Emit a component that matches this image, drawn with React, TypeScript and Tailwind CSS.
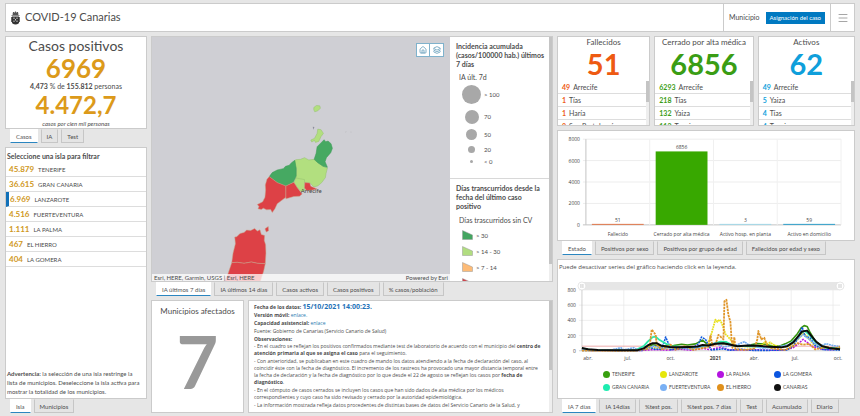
import { useState } from 'react';
import type { ReactNode } from 'react';
import { House, Layers, Menu } from 'lucide-react';
import clsx from 'clsx';

type Row = { count: string; name: string };

const islands: Row[] = [
  { count: '45.879', name: 'TENERIFE' },
  { count: '36.615', name: 'GRAN CANARIA' },
  { count: '6.969', name: 'LANZAROTE' },
  { count: '4.516', name: 'FUERTEVENTURA' },
  { count: '1.111', name: 'LA PALMA' },
  { count: '467', name: 'EL HIERRO' },
  { count: '404', name: 'LA GOMERA' },
];

const statusCards = [
  {
    title: 'Fallecidos',
    total: '51',
    color: 'text-[#ee5a12]',
    rows: [
      { count: '49', name: 'Arrecife' },
      { count: '1', name: 'Tías' },
      { count: '1', name: 'Haría' },
      { count: '0', name: 'San Bartolomé' },
    ],
  },
  {
    title: 'Cerrado por alta médica',
    total: '6856',
    color: 'text-[#3a9d14]',
    rows: [
      { count: '6293', name: 'Arrecife' },
      { count: '218', name: 'Tías' },
      { count: '132', name: 'Yaiza' },
      { count: '112', name: 'Teguise' },
    ],
  },
  {
    title: 'Activos',
    total: '62',
    color: 'text-[#0f9fdb]',
    rows: [
      { count: '49', name: 'Arrecife' },
      { count: '5', name: 'Yaiza' },
      { count: '4', name: 'Tías' },
      { count: '4', name: 'Teguise' },
    ],
  },
];

const bars = [
  { label: 'Fallecido', value: 51, color: '#e0774a' },
  { label: 'Cerrado por alta médica', value: 6856, color: '#38a800' },
  { label: 'Activo hosp. en planta', value: 3, color: '#a3d8e8' },
  { label: 'Activo en domicilio', value: 59, color: '#2f9fcb' },
];

type Series = {
  name: string;
  color: string;
  dot: string;
  dash?: string;
  width: number;
  points: number[][];
};

// Each point is [x in the plot, incidence]
const series: Series[] = [
  {
    name: 'TENERIFE', color: '#38940f', dot: 'bg-[#38a00f]', width: 1.6,
    points: [[24, 30], [32, 12], [60, 8], [84, 10], [90, 50], [95, 80], [100, 70], [108, 60], [116, 70], [124, 85], [130, 75], [138, 90], [145, 140], [149, 95], [155, 90], [162, 100], [170, 90], [178, 60], [190, 70], [200, 95], [208, 85], [214, 65], [222, 60], [228, 90], [234, 130], [240, 220], [244, 300], [247, 330], [250, 320], [253, 240], [258, 130], [264, 70], [272, 40], [283, 20]],
  },
  {
    name: 'LANZAROTE', color: '#e8e01c', dot: 'bg-[#e6e60a]', dash: '1.8 .7', width: 1.8,
    points: [[24, 20], [36, 2], [80, 3], [90, 20], [97, 40], [104, 25], [118, 20], [132, 30], [144, 40], [150, 80], [153, 180], [156, 320], [158, 410], [160, 380], [162, 410], [164, 370], [166, 300], [168, 220], [171, 180], [174, 130], [178, 60], [190, 55], [200, 60], [205, 80], [208, 120], [210, 90], [213, 110], [216, 80], [222, 50], [232, 60], [240, 140], [246, 230], [250, 190], [256, 90], [264, 40], [283, 25]],
  },
  {
    name: 'LA PALMA', color: '#b910e0', dot: 'bg-[#b414e0]', dash: '2 1', width: 1.5,
    points: [[24, 18], [34, 2], [84, 4], [96, 15], [110, 8], [122, 20], [134, 8], [146, 30], [152, 15], [163, 45], [172, 12], [186, 8], [198, 15], [212, 5], [228, 12], [236, 40], [241, 90], [246, 150], [250, 110], [255, 60], [262, 25], [274, 12], [283, 30]],
  },
  {
    name: 'LA GOMERA', color: '#0d58dc', dot: 'bg-[#0b55e0]', dash: '2 .8', width: 1.6,
    points: [[24, 5], [60, 2], [84, 4], [92, 45], [97, 20], [104, 20], [106, 100], [108, 180], [111, 90], [113, 15], [122, 30], [136, 45], [141, 90], [144, 180], [148, 150], [151, 70], [154, 10], [166, 25], [172, 5], [184, 20], [196, 5], [212, 5], [230, 10], [236, 60], [241, 170], [245, 310], [248, 190], [253, 170], [258, 70], [266, 15], [283, 10]],
  },
  {
    name: 'GRAN CANARIA', color: '#2ce8a8', dot: 'bg-[#1eecb0]', width: 1.8,
    points: [[24, 30], [34, 8], [78, 8], [86, 60], [90, 120], [95, 180], [98, 185], [102, 140], [108, 95], [114, 60], [124, 50], [136, 45], [148, 60], [156, 90], [163, 120], [169, 115], [176, 65], [188, 60], [202, 50], [216, 45], [230, 60], [238, 140], [244, 240], [248, 260], [253, 200], [260, 90], [268, 40], [283, 30]],
  },
  {
    name: 'FUERTEVENTURA', color: '#74aef2', dot: 'bg-[#7ab0f4]', dash: '2 .6', width: 1.7,
    points: [[24, 10], [38, 4], [54, 10], [63, 40], [66, 10], [76, 40], [80, 12], [90, 35], [96, 60], [104, 30], [118, 50], [132, 20], [148, 60], [158, 100], [166, 50], [180, 80], [187, 120], [191, 80], [204, 35], [220, 50], [232, 80], [240, 150], [246, 215], [252, 150], [256, 110], [263, 60], [269, 95], [275, 70], [283, 55]],
  },
  {
    name: 'EL HIERRO', color: '#e0962a', dot: 'bg-[#e0901c]', dash: '2.4 .8', width: 1.8,
    points: [[24, 2], [76, 2], [88, 20], [92, 60], [94, 280], [98, 210], [99, 80], [104, 20], [113, 80], [118, 15], [127, 60], [136, 10], [147, 40], [151, 50], [153, 200], [155, 70], [158, 80], [161, 210], [166, 150], [167, 650], [169, 670], [171, 470], [173, 380], [174, 180], [175, 40], [177, 180], [178, 20], [188, 10], [197, 30], [200, 150], [201, 260], [204, 150], [207, 170], [210, 60], [215, 30], [228, 10], [236, 60], [240, 100], [246, 80], [252, 90], [258, 20], [270, 50], [276, 20], [283, 50]],
  },
  {
    name: 'CANARIAS', color: '#0a0a0a', dot: 'bg-[#111111]', width: 2,
    points: [[24, 35], [30, 18], [40, 9], [60, 8], [80, 8], [86, 32], [90, 70], [95, 100], [99, 100], [104, 65], [112, 50], [120, 45], [132, 50], [140, 55], [145, 75], [151, 68], [158, 92], [166, 100], [171, 85], [180, 60], [190, 68], [200, 66], [212, 52], [224, 45], [230, 60], [236, 110], [241, 190], [245, 255], [250, 265], [254, 200], [259, 120], [265, 60], [272, 35], [283, 20]],
  },
];

function Panel({ children, className }: { children: ReactNode; className?: string }) {
  return <section className={clsx('min-h-0 min-w-0 overflow-hidden border border-[#cbcbcb] bg-white', className)}>{children}</section>;
}

function Tabs({ items }: { items: string[] }) {
  const [active, setActive] = useState(items[0]);
  return (
    <div role="tablist" className="flex h-[14px] shrink-0 gap-[3px] pl-[5px]">
      {items.map((item) => (
        <button
          key={item}
          type="button"
          role="tab"
          aria-selected={item === active}
          onClick={() => setActive(item)}
          className={clsx(
            'whitespace-nowrap border px-[5px] text-[6px] leading-[11px]',
            item === active
              ? 'border-transparent border-b-[#2b86c0] bg-white text-[#555555]'
              : 'border-[#c6c6c6] border-t-transparent bg-[#e4e4e4] text-[#4c4c4c]'
          )}
        >
          {item}
        </button>
      ))}
    </div>
  );
}

function Logo() {
  return (
    <svg viewBox="0 0 18 28" className="h-[14px] w-[9px]" fill="#333" aria-hidden="true">
      <path d="M4 2h2l1 2 1-3h2l1 3 1-2h2l1 5-2 2H5L3 7z" fill="#555" />
      <path d="M1 8h16v2H1z" fill="#888" />
      <path d="M2 11h14v12q0 3-7 4-7-1-7-4z" />
      <path d="M0 12h2v10H0zM16 12h2v10h-2z" fill="#666" />
      <path d="M5 13h2v3H5zM11 13h2v3h-2zM5 19h2v3H5zM11 19h2v3h-2zM8 16h2v3H8z" fill="#ccc" />
    </svg>
  );
}

function Header() {
  return (
    <header className="flex h-[29px] shrink-0 items-stretch border border-[#cbcbcb] bg-white">
      <div className="flex flex-1 items-center gap-[5px] pl-[5px]">
        <Logo />
        <h1 className="text-[11px] text-[#4c4c4c]">COVID-19 Canarias</h1>
      </div>
      <div className="flex items-center gap-[6px] border-l border-[#cbcbcb] px-[5px]">
        <span className="text-[7px]">Municipio</span>
        <button type="button" className="h-[12px] bg-[#0079c1] px-[4px] text-[6px] leading-[12px] text-white">
          Asignación del caso
        </button>
      </div>
      <button type="button" aria-label="Menú" className="flex w-6 items-center justify-center border-l border-[#cbcbcb] text-[#888888]">
        <Menu size={12} strokeWidth={1.5} />
      </button>
    </header>
  );
}

function CasesPanel() {
  return (
    <div className="flex min-h-0 min-w-0 flex-col">
      <Panel className="flex-1 text-center">
        <h2 className="text-[14px] leading-[17px]">Casos positivos</h2>
        <p className="text-[26px] font-bold leading-[28px] text-[#dc9a1a]">6969</p>
        <p className="text-[7px] leading-[8px]">
          <b>4,473</b> % de <b>155.812</b> personas
        </p>
        <p className="text-[24px] font-bold leading-[30px] text-[#dc9a1a]">4.472,7</p>
        <p className="text-[6px] italic leading-[7px]">casos por cien mil personas</p>
      </Panel>
      <Tabs items={['Casos', 'IA', 'Test']} />
    </div>
  );
}

function IslandsPanel() {
  const [selected, setSelected] = useState('LANZAROTE');
  return (
    <div className="flex min-h-0 min-w-0 flex-col">
      <Panel className="flex flex-1 flex-col">
        <h2 className="px-px pt-[2px] text-[7px] font-bold leading-[12px]">Seleccione una isla para filtrar</h2>
        <ul>
          {islands.map((island) => (
            <li key={island.name}>
              <button
                type="button"
                onClick={() => setSelected(island.name)}
                className={clsx(
                  'flex h-[15px] w-full items-center gap-[4px] border-b border-[#dddddd] text-left',
                  island.name === selected ? 'border-l-[3px] border-l-[#1170b8] pl-px' : 'pl-[3px]'
                )}
              >
                <span className="text-[8px] font-bold text-[#d0981c]">{island.count}</span>
                <span className="text-[6px]">{island.name}</span>
              </button>
            </li>
          ))}
        </ul>
        <p className="mt-auto pb-[2px] pl-px pr-1 text-[6px] leading-[9px]">
          <b>Advertencia:</b> la selección de una isla restringe la lista de municipios. Deseleccione la isla activa para
          mostrar la totalidad de los municipios.
        </p>
      </Panel>
      <Tabs items={['Isla', 'Municipios']} />
    </div>
  );
}

function IslandMap() {
  return (
    <svg viewBox="-237 -162 897 738" preserveAspectRatio="xMidYMid slice" className="h-full w-full" stroke="#c9a58c" strokeWidth="1.5" strokeLinejoin="round">
      <g fill="#b2df7f" stroke="#93bf70">
        <path d="M250 59L250 52L258 46L268 47L270 54L262 62L253 65Z" />
        <path d="M260 130L262 117L272 119L279 130L272 139L265 154L255 157L252 151L244 156L241 150L252 145Z" />
        <path d="M189 215L196 209L210 208L222 203L235 210L251 208L262 218L278 229L291 234L287 250L285 263L274 278L262 288L250 291L240 280L222 278L196 268L198 235Z" />
        <path d="M190 278L196 264L222 269L223 302L212 305L200 293Z" />
      </g>
      <g fill="#46a962" stroke="#3c9a58">
        <path d="M281 149L286 155L293 153L302 161L306 175L301 188L288 203L284 215L291 232L278 229L262 218L251 208L257 190L260 170L272 158Z" />
        <path d="M116 260L125 248L140 240L158 236L165 229L176 226L183 218L193 211L197 235L197 258L188 277L166 288L140 278Z" />
      </g>
      <g fill="#dd4146">
        <path d="M116 260L140 278L166 288L166 322L150 334L140 342L133 357L125 368L120 359L108 360L98 355L92 359L82 357L85 350L80 344L96 336L103 322L105 300L104 285L109 268Z" />
        <path d="M166 288L190 277L200 293L215 312L207 319L190 320L166 327Z" />
        <path d="M223 278L238 279L241 289L260 297L244 301L228 302L222 294Z" />
        <path d="M103 417L113 410L114 423L107 427Z" />
        <path d="M12 442L18 441L28 431L40 428L48 421L60 422L72 416L80 424L88 420L92 434L102 437L101 452L105 465L106 490L104 522L80 521L62 517L40 521L20 518L3 519L7 490L14 462Z" />
        <path d="M3 519L20 518L40 521L62 517L80 521L104 522L99 545L94 560L88 580H-22L-9 555Z" />
      </g>
      <path d="M247 110l5 1-4 8z" fill="#8d8d9a" stroke="none" />
      <path d="M345 126l3-1M361 126l2 0" stroke="#a8a8a8" />
      <text x="211" y="308" fontSize="18" fill="#444" stroke="none">Arrecife</text>
    </svg>
  );
}

const sizeLegend = [
  { label: '> 100', size: 'size-[19px]', row: 'h-[25px]' },
  { label: '70', size: 'size-[14px]', row: 'h-[19px]' },
  { label: '50', size: 'size-[11px]', row: 'h-[17px]' },
  { label: '20', size: 'size-[7px]', row: 'h-[13px]' },
  { label: '< 0', size: 'size-[3px]', row: 'h-[11px]' },
];

const colorLegend = [
  { label: '> 30', fill: '#43a560' },
  { label: '> 14 - 30', fill: '#b1dd80' },
  { label: '> 7 - 14', fill: '#fdbb77' },
  { label: '0 - 7', fill: '#d0424a' },
];

function MapLegend() {
  return (
    <aside className="flex w-[102px] shrink-0 bg-white">
      <div className="min-w-0 flex-1 overflow-hidden">
        <div className="h-[142px] border-b border-[#d8d8d8] pt-[5px]">
          <h3 className="pl-[6px] text-[7px] font-bold leading-[9px]">
            Incidencia acumulada (casos/100000 hab.) últimos 7 días
          </h3>
          <p className="pl-[9px] pt-[4px] text-[7px] leading-[9px]">IA últ. 7d</p>
          <ul className="text-[6px]">
            {sizeLegend.map((item) => (
              <li key={item.label} className={clsx('flex items-center gap-[3px] pl-[12px]', item.row)}>
                <span className="flex w-[19px] justify-center">
                  <span className={clsx('rounded-full bg-[#a8a8a8]', item.size)} />
                </span>
                {item.label}
              </li>
            ))}
          </ul>
        </div>
        <h3 className="pl-[6px] pr-[6px] pt-[5px] text-[7px] font-bold leading-[9px]">
          Días transcurridos desde la fecha del último caso positivo
        </h3>
        <p className="pl-[9px] pt-[4px] text-[7px] leading-[10px]">Días trascurridos sin CV</p>
        <ul className="pt-[2px] text-[6px]">
          {colorLegend.map((item) => (
            <li key={item.label} className="flex h-4 items-center gap-[3px] pl-[12px]">
              <svg viewBox="0 0 11 10" className="h-[10px] w-[11px]" fill={item.fill} stroke="#999" strokeWidth=".5">
                <path d="M.5.5L10.5 5v4.500H.5z" />
              </svg>
              {item.label}
            </li>
          ))}
        </ul>
      </div>
      <div className="w-[3px] bg-[#eeeeee]">
        <div className="h-[93%] bg-[#c4c4c4]" />
      </div>
    </aside>
  );
}

function MapPanel() {
  return (
    <div className="flex min-h-0 min-w-0 flex-col">
      <Panel className="flex flex-1">
        <div className="relative min-w-0 flex-1 bg-[#cfcfd4]">
          <IslandMap />
          <div className="absolute right-[6px] top-[6px] flex border border-[#7fb2cc] bg-white text-[#3f87ab]">
            <button type="button" aria-label="Inicio" className="flex h-3 w-[13px] items-center justify-center border-r border-[#7fb2cc]">
              <House size={8} />
            </button>
            <button type="button" aria-label="Capas" className="flex h-3 w-[13px] items-center justify-center">
              <Layers size={8} />
            </button>
          </div>
          <div className="absolute inset-x-0 bottom-0 flex justify-between bg-white/75 px-[2px] text-[6px] leading-[7px]">
            <span>Esri, HERE, Garmin, USGS | Esri, HERE</span>
            <span>Powered by Esri</span>
          </div>
        </div>
        <MapLegend />
      </Panel>
      <Tabs items={['IA últimos 7 días', 'IA últimos 14 días', 'Casos activos', 'Casos positivos', '% casos/población']} />
    </div>
  );
}

function NotesPanel() {
  return (
    <Panel className="flex">
      <div className="min-w-0 flex-1 overflow-hidden pl-[5px] pr-[6px] pt-[2px] font-['Open_Sans',sans-serif] text-[5px] leading-[7px]">
        <div className="leading-[8px]">
          <p>
            <b>Fecha de los datos:</b> <b className="text-[7px] text-[#1f72b8]">15/10/2021 14:00:23.</b>
          </p>
          <p>
            <b>Versión móvil:</b> <a href="#movil" className="text-[#2a7ab0]">enlace.</a>
          </p>
          <p>
            <b>Capacidad asistencial:</b> <a href="#asistencial" className="text-[#2a7ab0]">enlace</a>
          </p>
          <p>Fuente: Gobierno de Canarias (Servicio Canario de Salud)</p>
          <p className="font-bold">Observaciones:</p>
        </div>
        <div className="space-y-px">
          <p>
            - En el cuadro se reflejan los positivos confirmados mediante test de laboratorio de acuerdo con el municipio
            del <b>centro de atención primaria al que se asigna el caso</b> para el seguimiento.
          </p>
          <p>
            - Con anterioridad, se publicaban en este cuadro de mando los datos atendiendo a la fecha de declaración del
            caso, al coincidir éste con la fecha de diagnóstico. El incremento de los rastreos ha provocado una mayor
            distancia temporal entre la fecha de declaración y la fecha de diagnóstico por lo que desde el 22 de agosto
            se reflejan los casos por <b>fecha de diagnóstico</b>.
          </p>
          <p>
            - En el cómputo de casos cerrados se incluyen los casos que han sido dados de alta médica por los médicos
            correspondientes y cuyo caso ha sido revisado y cerrado por la autoridad epidemiológica.
          </p>
          <p>- La información mostrada refleja datos procedentes de distintas bases de datos del Servicio Canario de la Salud, y</p>
        </div>
      </div>
      <div className="w-[3px] bg-[#eeeeee]">
        <div className="h-[62%] bg-[#c4c4c4]" />
      </div>
    </Panel>
  );
}

function StatusCard({ title, total, color, rows }: (typeof statusCards)[number]) {
  return (
    <Panel className="flex flex-col">
      <h2 className="text-center text-[8px] leading-[10px]">{title}</h2>
      <p className={clsx('text-center text-[29px] font-bold leading-[34px]', color)}>{total}</p>
      <div className="flex min-h-0 flex-1">
        <ul className="min-w-0 flex-1 overflow-hidden">
          {rows.map((row) => (
            <li key={row.name} className="flex h-[13px] items-center gap-[3px] whitespace-nowrap border-b border-[#dddddd] pl-[4px] text-[7px]">
              <b className={color}>{row.count}</b>
              <span>{row.name}</span>
            </li>
          ))}
        </ul>
        <div className="w-[3px] bg-[#eeeeee]">
          <div className="h-[48%] bg-[#c4c4c4]" />
        </div>
      </div>
    </Panel>
  );
}

function BarChart() {
  const y = (value: number) => 94 - (value / 8000) * 86;
  return (
    <svg viewBox="0 0 297 109" className="h-full w-full font-['Open_Sans',sans-serif]" fontSize="5" fill="#444">
      {[0, 2000, 4000, 6000, 8000].map((tick) => (
        <g key={tick}>
          <path d={`M25 ${y(tick)}H284`} stroke={tick ? '#ededed' : '#c4c4c4'} />
          <text x="22" y={y(tick) + 2} textAnchor="end">{tick}</text>
        </g>
      ))}
      {[92, 156, 220, 284].map((x) => (
        <path key={x} d={`M${x} 8V94`} stroke="#f0f0f0" />
      ))}
      <path d="M28 8V94" stroke="#c4c4c4" />
      {bars.map((bar, i) => {
        const height = Math.max(94 - y(bar.value), 1);
        const center = 60 + i * 64;
        return (
          <g key={bar.label} textAnchor="middle">
            <rect x={center - 26} y={94 - height} width="52" height={height} fill={bar.color} />
            <text x={center} y={92 - height}>{bar.value}</text>
            <text x={center} y="105">{bar.label}</text>
          </g>
        );
      })}
    </svg>
  );
}

function LineChart({ hidden }: { hidden: string[] }) {
  const y = (value: number) => 73 - (value / 800) * 61;
  const toPath = (points: number[][]) => 'M' + points.map(([x, value]) => `${x} ${y(value).toFixed(1)}`).join('L');
  return (
    <svg viewBox="0 0 297 84" className="w-full font-['Open_Sans',sans-serif]" fontSize="5" fill="#444">
      {[0, 200, 400, 600, 800].map((tick) => (
        <g key={tick}>
          <path d={`M21 ${y(tick)}H283`} stroke={tick ? '#e8e8e8' : '#bbbbbb'} strokeWidth=".7" />
          <text x="18" y={y(tick) + 2} textAnchor="end">{tick}</text>
        </g>
      ))}
      {[66, 108, 150, 192, 234, 276].map((x) => (
        <path key={x} d={`M${x} 12V73`} stroke="#e8e8e8" strokeWidth=".7" />
      ))}
      <path d="M24 12V73" stroke="#bbbbbb" strokeWidth=".7" />
      <path d={`M24 ${y(60)}H283`} stroke="#e88a8a" strokeWidth=".7" />
      {series
        .filter((s) => !hidden.includes(s.name))
        .map((s) => (
          <path key={s.name} d={toPath(s.points)} fill="none" stroke={s.color} strokeWidth={s.width} strokeDasharray={s.dash} strokeLinejoin="round" />
        ))}
      <rect x="24" y="4" width="259" height="8" fill="#e6e6e6" />
      {[24, 283].map((x) => (
        <g key={x}>
          <circle cx={x} cy="8" r="4" fill="#fff" stroke="#dcdcdc" strokeWidth=".7" />
          <path d={`M${x - 1} 6v4M${x + 1} 6v4`} stroke="#aaa" strokeWidth=".6" />
        </g>
      ))}
      <g textAnchor="middle">
        <text x="30" y="82">abr.</text>
        <text x="70" y="82">jul.</text>
        <text x="113" y="82">oct.</text>
        <text x="158" y="82" fontWeight="bold">2021</text>
        <text x="197" y="82">abr.</text>
        <text x="238" y="82">jul.</text>
        <text x="281" y="82">oct.</text>
      </g>
    </svg>
  );
}

function TrendPanel() {
  const [hidden, setHidden] = useState<string[]>([]);

  const toggle = (name: string) => {
    setHidden(hidden.includes(name) ? hidden.filter((n) => n !== name) : [...hidden, name]);
  };

  return (
    <Panel className="flex flex-1 flex-col">
      <p className="pl-px pt-[2px] font-['Open_Sans',sans-serif] text-[6px] leading-[10px]">
        Puede desactivar series del gráfico haciendo click en la leyenda.
      </p>
      <div className="mt-[6px]">
        <LineChart hidden={hidden} />
      </div>
      <div className="mt-[7px] grid grid-cols-[repeat(4,57px)] gap-y-px pl-[45px]">
        {series.map((s) => (
          <button
            key={s.name}
            type="button"
            onClick={() => toggle(s.name)}
            className={clsx('flex h-3 items-center gap-[2px] whitespace-nowrap text-[5px]', hidden.includes(s.name) && 'opacity-40')}
          >
            <span className={clsx('size-[7px] shrink-0 rounded-full', s.dot)} />
            {s.name}
          </button>
        ))}
      </div>
    </Panel>
  );
}

export default function App() {
  return (
    <div className="flex h-screen flex-col gap-1 bg-[#e6e6e6] px-[5px] py-[3px] font-['Lato',sans-serif] text-[#4c4c4c]">
      <Header />
      <main className="grid min-h-0 flex-1 grid-cols-[minmax(0,142fr)_minmax(0,402fr)_minmax(0,298fr)] gap-1">
        <div className="grid min-h-0 min-w-0 grid-cols-1 grid-rows-[minmax(0,107fr)_minmax(0,266fr)] gap-1">
          <CasesPanel />
          <IslandsPanel />
        </div>
        <div className="grid min-h-0 min-w-0 grid-cols-1 grid-rows-[minmax(0,260fr)_minmax(0,113fr)] gap-1">
          <MapPanel />
          <div className="grid min-h-0 grid-cols-[minmax(0,93fr)_minmax(0,305fr)] gap-1">
            <Panel className="flex flex-col items-center pt-[5px]">
              <h2 className="text-[8px] leading-[10px]">Municipios afectados</h2>
              <p className="flex flex-1 items-center pb-[6px] text-[72px] font-bold leading-[72px] text-[#999999]">7</p>
            </Panel>
            <NotesPanel />
          </div>
        </div>
        <div className="grid min-h-0 min-w-0 grid-cols-1 grid-rows-[minmax(0,90fr)_minmax(0,125fr)_minmax(0,154fr)] gap-1">
          <div className="grid min-h-0 grid-cols-[minmax(0,93fr)_minmax(0,99fr)_minmax(0,97fr)] gap-1">
            {statusCards.map((card) => (
              <StatusCard key={card.title} {...card} />
            ))}
          </div>
          <div className="flex min-h-0 min-w-0 flex-col">
            <Panel className="flex-1">
              <BarChart />
            </Panel>
            <Tabs items={['Estado', 'Positivos por sexo', 'Positivos por grupo de edad', 'Fallecidos por edad y sexo']} />
          </div>
          <div className="flex min-h-0 min-w-0 flex-col">
            <TrendPanel />
            <Tabs items={['IA 7 días', 'IA 14días', '%test pos.', '%test pos. 7 días', 'Test', 'Acumulado', 'Diario']} />
          </div>
        </div>
      </main>
    </div>
  );
}
